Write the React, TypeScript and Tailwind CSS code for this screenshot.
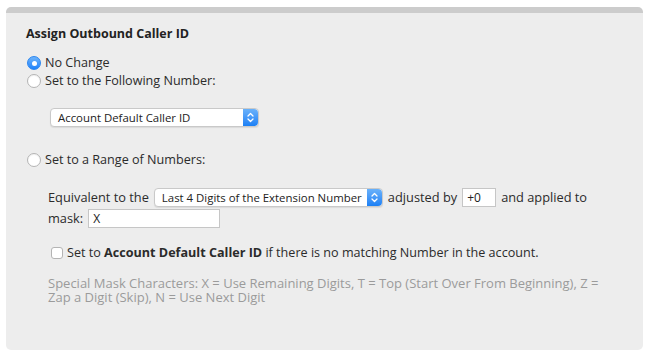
import React from "react";

const font = { fontFamily: '"Open Sans", "Liberation Sans", sans-serif' };

function Radio({ checked }: { checked?: boolean }) {
  if (checked) {
    return (
      <span className="w-[14px] h-[14px] rounded-full flex items-center justify-center shrink-0 bg-gradient-to-b from-[#6cb3fa] to-[#1a82fb] border border-[#2b86f0]">
        <span className="w-[5px] h-[5px] rounded-full bg-white" />
      </span>
    );
  }
  return <span className="w-[14px] h-[14px] rounded-full shrink-0 bg-white border border-[#b4b4b4] shadow-[inset_0_1px_1px_rgba(0,0,0,0.06)]" />;
}

function Stepper() {
  return (
    <span className="w-[15px] h-full rounded-r-[4px] bg-gradient-to-b from-[#69b1fa] to-[#1a80f5] flex items-center justify-center shrink-0">
      <svg width="7" height="11" viewBox="0 0 7 11" fill="none" stroke="white" strokeWidth="1.3" strokeLinecap="round" strokeLinejoin="round">
        <path d="M1 4L3.5 1.5L6 4" />
        <path d="M1 7L3.5 9.5L6 7" />
      </svg>
    </span>
  );
}

function Select({ label, width }: { label: string; width: string }) {
  return (
    <div className={`${width} h-[19px] flex items-stretch rounded-[4px] bg-white border border-[#c9c9c9] shadow-[0_1px_1px_rgba(0,0,0,0.08)] shrink-0`}>
      <span className="flex-1 pl-[7px] text-[11.4px] leading-[17px] text-[#222] whitespace-nowrap overflow-hidden">{label}</span>
      <Stepper />
    </div>
  );
}

export default function App() {
  return (
    <div className="w-[648px] h-[357px] bg-white pt-[7px] pl-[6px]" style={font}>
      <div className="w-[637px] h-[343px] rounded-[5px] bg-[#ededed] border-t-[6px] border-[#cccccc] pl-[20px] pt-[13px] text-[#2b2b2b]">
        <h3 className="text-[12.5px] leading-[16px] font-bold text-[#222]">Assign Outbound Caller ID</h3>

        {/* caller id mode */}
        <div className="mt-[12px] ml-[1px] flex flex-col">
          <label className="h-[18px] flex items-center gap-[4px] text-[12.6px]">
            <Radio checked />
            No Change
          </label>
          <label className="h-[18px] flex items-center gap-[4px] text-[12.6px]">
            <Radio />
            Set to the Following Number:
          </label>
        </div>

        <div className="mt-[18px] ml-[24px]">
          <Select label="Account Default Caller ID" width="w-[209px]" />
        </div>

        <label className="mt-[24px] ml-[1px] h-[18px] flex items-center gap-[4px] text-[12.6px]">
          <Radio />
          Set to a Range of Numbers:
        </label>

        <div className="mt-[19px] ml-[22px] w-[552px] flex flex-wrap items-center gap-x-[5px] gap-y-[2px] text-[12.8px]">
          <span>Equivalent to the</span>
          <Select label="Last 4 Digits of the Extension Number" width="w-[229px]" />
          <span>adjusted by</span>
          <div className="w-[34px] h-[19px] bg-white border border-[#c6c6c6] pl-[4px] text-[12px] leading-[17px] text-[#222]">+0</div>
          <span>and applied to</span>
          <span>mask:</span>
          <div className="w-[132px] h-[19px] bg-white border border-[#c6c6c6] pl-[4px] text-[12px] leading-[17px] text-[#222]">X</div>
        </div>

        <label className="mt-[16px] ml-[25px] h-[18px] flex items-center gap-[4px] text-[12.6px]">
          <span className="w-[12px] h-[12px] rounded-[3px] bg-white border border-[#b4b4b4] shrink-0" />
          <span>
            Set to <b className="font-bold">Account Default Caller ID</b> if there is no matching Number in the account.
          </span>
        </label>

        <p className="mt-[14px] ml-[22px] w-[560px] text-[13px] leading-[14px] text-[#9b9b9b]">
          Special Mask Characters: X = Use Remaining Digits, T = Top (Start Over From Beginning), Z = Zap a Digit (Skip), N = Use Next Digit
        </p>
      </div>
    </div>
  );
}
